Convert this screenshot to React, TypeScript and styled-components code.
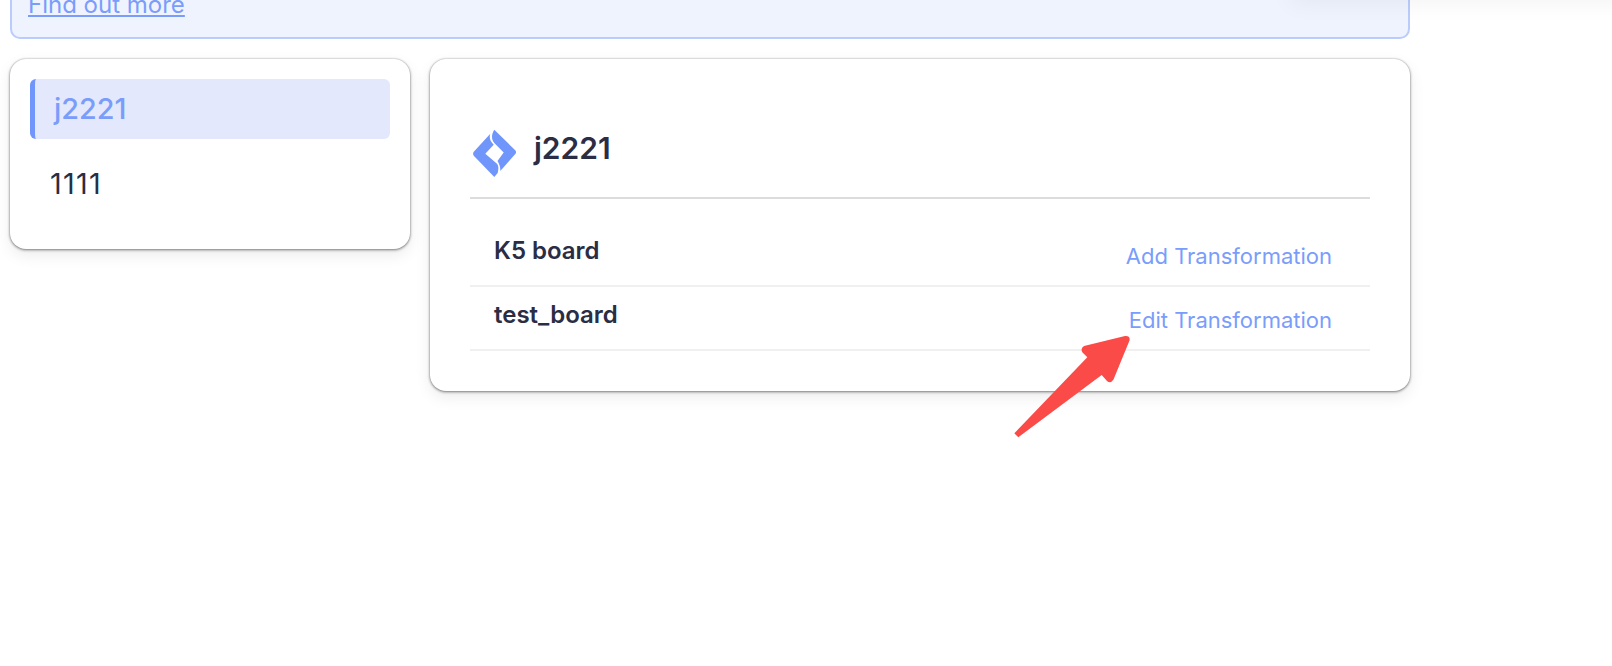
import React from "react";
import styled, { createGlobalStyle } from "styled-components";

const Global = createGlobalStyle`
  html, body { margin: 0; padding: 0; background: #fff; }
  body {
    font-family: Inter, "Liberation Sans", sans-serif;
    color: #2a2d44;
    -webkit-font-smoothing: antialiased;
  }
`;

const Page = styled.div`
  position: relative;
  width: 1612px;
  height: 666px;
  overflow: hidden;
  background: #fff;
`;

const Content = styled.div`
  width: 1400px;
  margin-left: 10px;
`;

const Banner = styled.div`
  box-sizing: border-box;
  height: 80px;
  margin-top: -41px;
  padding: 0 16px 18px;
  display: flex;
  align-items: flex-end;
  background: #eff3fe;
  border: 2px solid #b9ccfc;
  border-radius: 10px;
`;

const BannerLink = styled.a`
  font-size: 24px;
  line-height: 28px;
  color: #7a9dfb;
  text-decoration: underline;
  text-underline-offset: 2px;
`;

const Columns = styled.div`
  display: grid;
  grid-template-columns: 400px 980px;
  gap: 20px;
  margin-top: 20px;
  align-items: start;
`;

const Card = styled.section`
  box-sizing: border-box;
  background: #fff;
  border-radius: 16px;
  box-shadow: 0 1px 3px rgba(0, 0, 0, 0.45), 0 0 2px rgba(0, 0, 0, 0.25), 0 6px 16px rgba(0, 0, 0, 0.08);
`;

const SideCard = styled(Card)`
  height: 190px;
  padding: 20px 20px;
  display: flex;
  flex-direction: column;
  gap: 15px;
`;

const SideItem = styled.div<{ $active?: boolean }>`
  box-sizing: border-box;
  height: 60px;
  padding-bottom: 2px;
  display: flex;
  align-items: center;
  font-size: 28.8px;
  font-kerning: none;
  font-weight: ${(p) => (p.$active ? 500 : 400)};
  letter-spacing: ${(p) => (p.$active ? "0" : "1.3px")};
  padding-left: ${(p) => (p.$active ? "19px" : "20px")};
  color: ${(p) => (p.$active ? "#7a9dfb" : "#2a2d44")};
  background: ${(p) => (p.$active ? "#e3e8fc" : "transparent")};
  border-left: ${(p) => (p.$active ? "5px solid #7196fb" : "0")};
  border-radius: 6px;
`;

const MainCard = styled(Card)`
  height: 332px;
  padding: 0 40px;
`;

const Header = styled.header`
  box-sizing: border-box;
  height: 140px;
  padding: 70px 3px 0;
  display: flex;
  align-items: flex-start;
  gap: 17px;
  border-bottom: 2px solid #dcdcdc;
`;

const Title = styled.h2`
  margin: -1px 0 0;
  font-size: 30px;
  line-height: 40px;
  font-weight: 600;
  color: #2a2d44;
`;

const Rows = styled.div`
  margin-top: 24px;
`;

const Row = styled.div`
  box-sizing: border-box;
  height: 64px;
  padding: 0 38px 0 24px;
  display: flex;
  justify-content: space-between;
  border-bottom: 2px solid #f0f0f0;
`;

const BoardName = styled.span`
  margin-top: 14px;
  font-size: 24px;
  line-height: 28px;
  font-weight: 600;
  color: #2a2d44;
`;

const Action = styled.a`
  margin-top: 19px;
  font-size: 22px;
  line-height: 28px;
  color: #7a9dfb;
`;

const TopShade = styled.div`
  position: absolute;
  top: -60px;
  left: 1290px;
  width: 420px;
  height: 60px;
  box-shadow: 0 3px 24px rgba(0, 0, 0, 0.05);
`;

const Arrow = styled.svg`
  position: absolute;
  left: 1000px;
  top: 320px;
`;

const LogoMark = styled.svg`
  display: block;
  flex: none;
`;

const Logo = () => (
  <LogoMark width="44" height="48" viewBox="0 0 44 48" aria-hidden="true">
    <path
      fill="#7196fb"
      d="M17.3 4.7 L1 22.5 Q-0.8 24.7 1 27 L21.3 48 L24.7 44 C25.4 40.5 26 37 24 34.7 L12.3 24.7 L20.7 15.7 C17.5 12.5 15.8 9 17.3 4.7 Z"
    />
    <path
      fill="#7196fb"
      d="M21.3 0.7 L42 21 Q44 23 42.3 25 L27.3 42 C27.6 38.5 26.3 34.7 24.5 32 L30.7 23.5 L21.3 14 C18 10 18.5 5 21.3 0.7 Z"
    />
  </LogoMark>
);

export default function App() {
  return (
    <Page>
      <Global />
      <Content>
        <Banner>
          <BannerLink>Find out more</BannerLink>
        </Banner>
        <Columns>
          <SideCard>
            <SideItem $active>j2221</SideItem>
            <SideItem>1111</SideItem>
          </SideCard>
          <MainCard>
            <Header>
              <Logo />
              <Title>j2221</Title>
            </Header>
            <Rows>
              <Row>
                <BoardName>K5 board</BoardName>
                <Action>Add Transformation</Action>
              </Row>
              <Row>
                <BoardName>test_board</BoardName>
                <Action>Edit Transformation</Action>
              </Row>
            </Rows>
          </MainCard>
        </Columns>
      </Content>
      <TopShade />
      <Arrow width="140" height="125" viewBox="1000 320 140 125" aria-hidden="true">
        <path
          fill="#fa4b48"
          d="M1014.3 433.3 L1087.3 357.3 L1082.5 352.5 Q1080 348.5 1084 346 L1125 336 Q1130.5 335.5 1129.5 340.5 L1113.5 379.5 Q1110.5 384 1107 381 L1101.7 375 L1018.3 437.3 Z"
        />
      </Arrow>
    </Page>
  );
}
